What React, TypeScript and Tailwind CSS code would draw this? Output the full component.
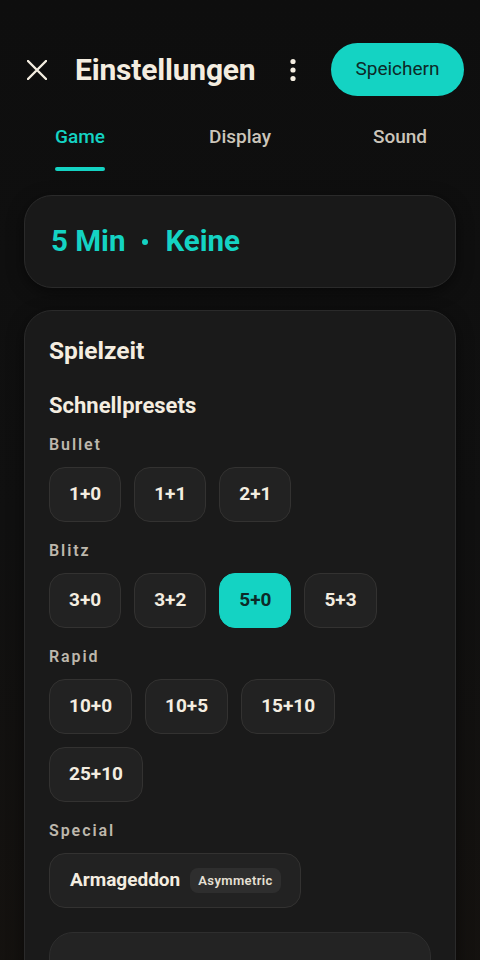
import React, { useState } from 'react';

type Preset = { label: string };

const groups: { name: string; presets: Preset[] }[] = [
  { name: 'Bullet', presets: [{ label: '1+0' }, { label: '1+1' }, { label: '2+1' }] },
  { name: 'Blitz', presets: [{ label: '3+0' }, { label: '3+2' }, { label: '5+0' }, { label: '5+3' }] },
  {
    name: 'Rapid',
    presets: [{ label: '10+0' }, { label: '10+5' }, { label: '15+10' }, { label: '25+10' }],
  },
];

const tabs = ['Game', 'Display', 'Sound'];

const CloseIcon = () => (
  <svg width="20" height="20" viewBox="0 0 20 20" fill="none" stroke="#f4ede0" strokeWidth="2.4" strokeLinecap="round">
    <path d="M1 1 19 19M19 1 1 19" />
  </svg>
);

const KebabIcon = () => (
  <svg width="24" height="24" viewBox="0 0 24 24" fill="#f4ede0">
    <circle cx="12" cy="3.5" r="2.6" />
    <circle cx="12" cy="12" r="2.6" />
    <circle cx="12" cy="20.5" r="2.6" />
  </svg>
);

const App: React.FC = () => {
  const [activeTab, setActiveTab] = useState('Game');
  const [selected, setSelected] = useState('5+0');

  return (
    <div
      className="min-h-[960px] w-full overflow-hidden bg-gradient-to-b from-[#0e0e0e] via-[#101010] to-[#15120f] text-[#f4ede0]"
      style={{ fontFamily: 'Roboto, "Noto Sans", sans-serif' }}
    >
      {/* top bar */}
      <header className="flex items-center pl-[27px] pr-4 pt-[43px]">
        <button className="flex h-[53px] items-center">
          <CloseIcon />
        </button>
        <h1 className="ml-[28px] flex-1 text-[30px] font-bold leading-[36px] tracking-[-0.2px] text-[#f4ede0]">
          Einstellungen
        </h1>
        <button className="mr-[26px] flex items-center">
          <KebabIcon />
        </button>
        <button className="flex h-[53px] w-[133px] items-center justify-center rounded-full bg-[#14d3c3] text-[19px] font-normal text-[#0d2a28]">
          Speichern
        </button>
      </header>

      {/* tabs */}
      <nav className="mt-[29px] grid grid-cols-3">
        {tabs.map((t) => (
          <button key={t} onClick={() => setActiveTab(t)} className="flex flex-col items-center">
            <span
              className={
                activeTab === t
                  ? 'text-[19px] leading-[24px] font-medium text-[#14d3c3]'
                  : 'text-[19px] leading-[24px] font-medium text-[#cbc5ba]'
              }
            >
              {t}
            </span>
            <span
              className={
                activeTab === t
                  ? 'mt-[18px] h-[4px] w-[50px] rounded-full bg-[#14d3c3]'
                  : 'mt-[18px] h-[4px] w-[50px] rounded-full bg-transparent'
              }
            />
          </button>
        ))}
      </nav>

      {/* summary */}
      <section className="mx-6 mt-[24px] flex h-[93px] items-center rounded-[28px] border border-[#2a2a2a] bg-[#191919] px-[26px] shadow-[0_4px_16px_rgba(0,0,0,0.5)]">
        <p className="flex items-center text-[29.5px] font-bold leading-none text-[#14d3c3]">
          <span>5 Min</span>
          <span className="mx-[17px] inline-block h-[6px] w-[6px] rounded-full bg-[#14d3c3]" />
          <span>Keine</span>
        </p>
      </section>

      {/* time control */}
      <section className="mx-6 mt-[22px] rounded-[28px] border border-[#2a2a2a] bg-[#1a1a1a] px-6 pt-[26px] pb-6 shadow-[0_4px_16px_rgba(0,0,0,0.5)]">
        <h2 className="text-[24.5px] font-bold leading-[28px]">Spielzeit</h2>
        <h3 className="mt-[28px] text-[22px] font-bold leading-[26px]">Schnellpresets</h3>

        {groups.map((g, gi) => (
          <div key={g.name} className={gi === 0 ? 'mt-4' : 'mt-[19px]'}>
            <div className="text-[16px] font-semibold leading-[20px] tracking-[0.12em] text-[#bdb7ac]">{g.name}</div>
            <div className="mt-3 flex flex-wrap gap-[13px]">
              {g.presets.map((p) => (
                <button
                  key={p.label}
                  onClick={() => setSelected(p.label)}
                  className={
                    selected === p.label
                      ? 'h-[55px] rounded-[16px] border border-[#14d3c3] bg-[#14d3c3] px-[19px] text-[19px] font-bold text-[#0d2a28]'
                      : 'h-[55px] rounded-[16px] border border-[#333231] bg-[#222222] px-[19px] text-[19px] font-bold text-[#f4ede0]'
                  }
                >
                  {p.label}
                </button>
              ))}
            </div>
          </div>
        ))}

        <div className="mt-[19px]">
          <div className="text-[16px] font-semibold leading-[20px] tracking-[0.12em] text-[#bdb7ac]">Special</div>
          <div className="mt-3 flex">
            <button className="flex h-[55px] items-center gap-[10px] rounded-[16px] border border-[#333231] bg-[#222222] pl-5 pr-[19px]">
              <span className="text-[19px] font-bold text-[#f4ede0]">Armageddon</span>
              <span className="rounded-[8px] bg-[#2e2e2e] px-[8px] py-[3px] text-[13px] font-semibold tracking-[0.03em] text-[#e6e0d5]">
                Asymmetric
              </span>
            </button>
          </div>
        </div>

        <div className="mt-6 h-[80px] rounded-[24px] border border-[#2e2e2e] bg-[#232323]" />
      </section>
    </div>
  );
};

export default App;
